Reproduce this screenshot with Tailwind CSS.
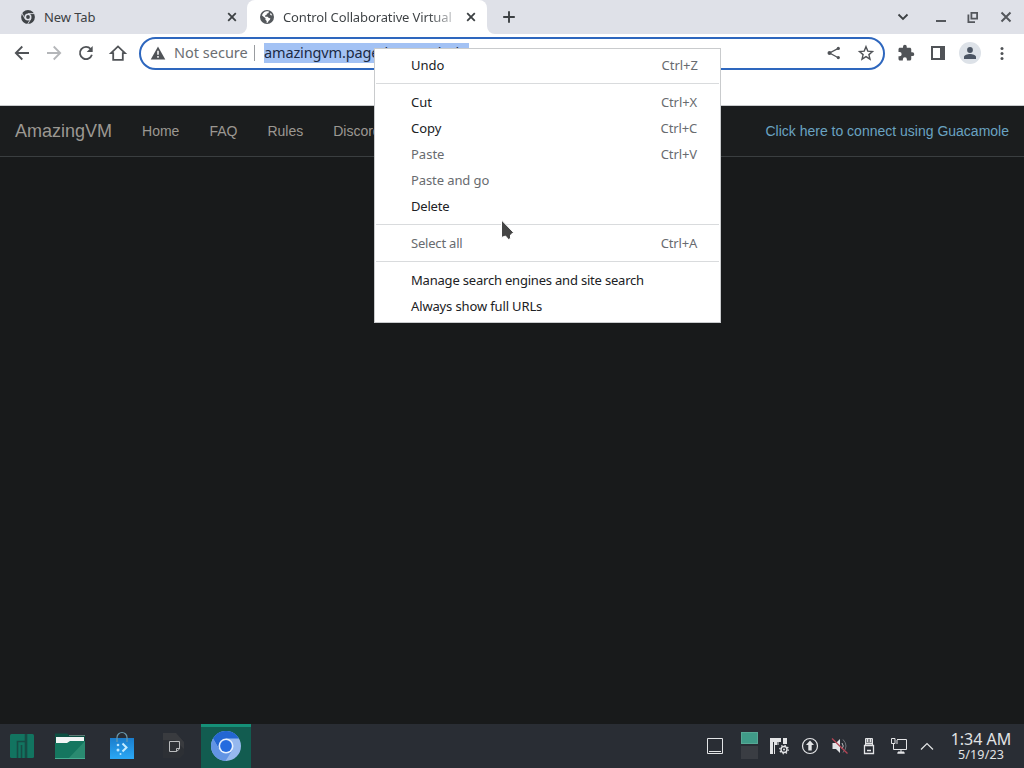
<!DOCTYPE html>
<html lang="en">
<head>
  <meta charset="UTF-8" />
  <meta name="viewport" content="width=device-width, initial-scale=1.0" />
  <title>Control Collaborative Virtual Machines</title>
  <script src="https://cdn.jsdelivr.net/npm/@tailwindcss/browser@4"></script>
</head>
<body class="relative w-[1024px] h-[768px] overflow-hidden flex flex-col bg-[#181a1b] font-['Noto_Sans',sans-serif] text-[13px] text-[#3c4043]">
  <!-- Tab strip -->
  <header class="h-[34px] shrink-0 bg-[#dfe1e8] flex">
    <div class="w-[247px] flex items-center pl-[21px] pr-[7px]">
      <svg class="w-[14px] h-[14px]" viewBox="0 0 14 14" fill="none" stroke="#3f4347">
        <circle cx="7" cy="7" r="5.2" stroke-width="3.4" />
        <circle cx="7" cy="7" r="1.9" fill="#3f4347" stroke="none" />
        <path d="M7 3.6h6.6M4.1 8.8L.8 3M9.9 8.7L6.7 14" stroke="#dfe1e8" stroke-width=".9" />
      </svg>
      <span class="ml-[9px] pt-[2px] tracking-[-0.1px]">New Tab</span>
      <svg class="ml-auto w-4 h-4" viewBox="0 0 16 16" stroke="#3c4043" stroke-width="1.8"><path d="M4.2 4.2l7.6 7.6M11.8 4.2l-7.6 7.6" /></svg>
    </div>
    <div class="relative w-[240px] bg-white rounded-t-lg flex items-center pl-[13px] pr-2">
      <div class="absolute bottom-0 -left-2 w-2 h-2 bg-white"><div class="w-2 h-2 bg-[#dfe1e8] rounded-br-lg"></div></div>
      <div class="absolute bottom-0 -right-2 w-2 h-2 bg-white"><div class="w-2 h-2 bg-[#dfe1e8] rounded-bl-lg"></div></div>
      <svg class="w-[14px] h-[14px] shrink-0" viewBox="0 0 14 14">
        <circle cx="7" cy="7" r="7" fill="#54585c" />
        <path d="M5.5 1.6c1.6-.5 2.6-.3 3.4 0l-.4 1.5-1.7.6-.3 1.3-1.5.5.2 1.2h2.5l1.1 1.3 1.5.2-.3 1.5-1.500 1.200-.6 1.500-1.300.7.1-2-1.300-1.300.1-1.600L2 5.400C2.500 3.500 3.900 2.100 5.500 1.600zM10.200 3l1.200.8.8 1.800-1.900-.5z" fill="#fff" />
      </svg>
      <span class="ml-[9px] pt-[2px] w-[170px] overflow-hidden whitespace-nowrap tracking-[-0.12px] bg-linear-to-r from-[#3c4043] from-85% to-[#c8cacc] bg-clip-text text-transparent">Control Collaborative Virtual</span>
      <svg class="ml-auto w-4 h-4 shrink-0" viewBox="0 0 16 16" stroke="#3c4043" stroke-width="1.800"><path d="M4.200 4.200l7.600 7.600M11.800 4.200l-7.600 7.600" /></svg>
    </div>
    <svg class="ml-[15px] mt-[10px] w-[14px] h-[14px]" viewBox="0 0 14 14" stroke="#3c4043" stroke-width="1.900"><path d="M7 1.200v11.600M1.200 7h11.600" /></svg>
    <div class="ml-auto flex items-center gap-[18px] pr-[10px]">
      <svg class="w-4 h-4" viewBox="0 0 16 16" fill="none" stroke="#3c4043" stroke-width="1.800"><path d="M3.500 5.500L8 10l4.500-4.500" /></svg>
      <svg class="ml-1 w-4 h-4" viewBox="0 0 16 16" stroke="#54575c" stroke-width="2"><path d="M3 12h10" /></svg>
      <svg class="-ml-[2px] w-4 h-4" viewBox="0 0 16 16" fill="none" stroke="#54575c" stroke-width="1.800"><path d="M6.400 3.900h5.700v5.700H6.400zM3.400 5.500v7.600H10" /></svg>
      <svg class="-ml-px w-4 h-4" viewBox="0 0 16 16" stroke="#54575c" stroke-width="2"><path d="M3.500 3.500l9 9M12.500 3.500l-9 9" /></svg>
    </div>
  </header>

  <!-- Toolbar -->
  <div class="h-[38px] shrink-0 bg-white flex items-center pl-3">
    <div class="flex gap-3">
      <svg class="w-5 h-5" viewBox="0 0 20 20" fill="none" stroke="#505357" stroke-width="1.800"><path d="M17 10H4M10.300 3.500L3.800 10l6.500 6.500" /></svg>
      <svg class="w-5 h-5" viewBox="0 0 20 20" fill="none" stroke="#b4b6b9" stroke-width="1.800"><path d="M3 10h13M9.700 3.500l6.500 6.500-6.500 6.500" /></svg>
      <svg class="w-5 h-5" viewBox="0 0 20 20" fill="none" stroke="#505357" stroke-width="1.800"><path d="M15.900 11.800A6.100 6.100 0 1 1 14.700 6" /><path d="M16.700 3v6h-6z" fill="#505357" stroke="none" /></svg>
      <svg class="w-5 h-5" viewBox="0 0 20 20" fill="none" stroke="#505357" stroke-width="1.800"><path d="M3 10.200h2.200v6.700h9.600v-6.700H17L10 3.400z" /></svg>
    </div>
    <!-- Address bar -->
    <div class="ml-[11px] mt-px w-[746px] h-[33px] rounded-full border-2 border-[#2e67be] bg-white flex items-center pl-2 pr-2 pb-px text-[14.500px]">
      <svg class="w-[18px] h-[18px]" viewBox="0 0 18 18"><path d="M9 2.500L16.300 15.500H1.700z" fill="#505357" /><path d="M9 6.800v4M9 12v1.800" stroke="#fff" stroke-width="1.500" /></svg>
      <span class="ml-[7px] w-[74px] whitespace-nowrap text-[#6b6e72]">Not secure</span>
      <span class="ml-[6px] w-px h-4 bg-[#999ca0]"></span>
      <span class="ml-[9px] w-[205px] h-5 leading-[18px] bg-[#a3c2f4] text-[#1b2a45] whitespace-nowrap tracking-[-0.14px]">amazingvm.page/browse-hub</span>
      <svg class="ml-auto w-4 h-4" viewBox="0 0 16 16" fill="#505357" stroke="#505357"><path d="M12.300 3.400L3.600 8l8.700 4.700" fill="none" stroke-width="1.300" /><circle cx="12.300" cy="3.400" r="1.600" stroke="none" /><circle cx="3.500" cy="8" r="2" stroke="none" /><circle cx="12.300" cy="12.600" r="1.600" stroke="none" /></svg>
      <svg class="ml-[15px] w-[18px] h-[18px]" viewBox="0 0 18 18" fill="none" stroke="#505357" stroke-width="1.400"><path d="M9 2.700l1.800 4.400 4.700.4-3.600 3.100 1.100 4.600L9 12.700l-4 2.500 1.100-4.600-3.600-3.100 4.700-.4z" /></svg>
    </div>
    <svg class="ml-[12px] w-[18px] h-[18px]" viewBox="0 0 24 24" fill="#505357"><path d="M20.500 11H19V7c0-1.100-.9-2-2-2h-4V3.500a2.500 2.500 0 0 0-5 0V5H4c-1.100 0-2 .9-2 2v3.800h1.500a2.700 2.700 0 0 1 0 5.400H2V20c0 1.100.9 2 2 2h3.800v-1.500a2.700 2.700 0 0 1 5.400 0V22H17c1.100 0 2-.9 2-2v-4h1.500a2.500 2.500 0 0 0 0-5z" /></svg>
    <svg class="ml-[15px] w-4 h-4" viewBox="0 0 16 16"><path d="M1 1h14v14H1zM3 3v10h7V3z" fill="#505357" fill-rule="evenodd" /></svg>
    <div class="ml-[13px] size-[22px] rounded-full bg-[#dde2e8] flex items-center justify-center">
      <svg class="w-3 h-3" viewBox="0 0 12 12" fill="#4b5563"><circle cx="6" cy="3" r="2.900" /><path d="M0 12v-2c0-2 3.500-3 6-3s6 1 6 3v2z" /></svg>
    </div>
    <svg class="ml-[13px] w-4 h-4" viewBox="0 0 16 16" fill="#505357"><circle cx="8" cy="3.500" r="1.500" /><circle cx="8" cy="8.500" r="1.500" /><circle cx="8" cy="13.500" r="1.500" /></svg>
  </div>
  <div class="h-[34px] shrink-0 bg-white border-b border-[#c9cbcd]"></div>

  <!-- Web page -->
  <nav class="h-[51px] shrink-0 bg-[#1b1d1e] border-b border-[#3a3e40] flex items-center px-[15px] font-['Liberation_Sans',Arial,sans-serif] text-[14px] text-[#9b9892]">
    <a href="#" class="text-[18px]">AmazingVM</a>
    <div class="ml-[30px] flex gap-[30px]">
      <a href="#">Home</a>
      <a href="#">FAQ</a>
      <a href="#">Rules</a>
      <a href="#">Discord</a>
    </div>
    <a href="#" class="ml-auto text-[#6aa3c2]">Click here to connect using Guacamole</a>
  </nav>
  <main class="grow bg-[#181a1b]"></main>

  <!-- Taskbar -->
  <footer class="h-[44px] shrink-0 bg-[#292d34] flex items-center">
    <svg class="ml-[9px] w-[26px] h-[26px]" viewBox="0 0 26 26"><rect x="1" y="1" width="24" height="24" rx="1.500" fill="#127460" /><path d="M8.500 25V8.500H16M16.500 1v24M12.500 12v13M17.500 25V1" fill="none" stroke="#174c45" stroke-width="1.600" /></svg>
    <svg class="ml-[19px] w-8 h-7" viewBox="0 0 32 28">
      <path d="M1 4V1.500h12L16 4h15v8H1z" fill="#0d4f42" /><path d="M15 3.500h16" stroke="#769d94" stroke-width=".7" />
      <path d="M2 5h28v8H2z" fill="#f2f5f5" />
      <path d="M1 11h12l3-2h15v18H1z" fill="#15765f" /><path d="M31 9v18H14z" fill="#2a8a70" /><path d="M1 26.500h30" stroke="#46ad91" />
    </svg>
    <svg class="ml-[23px] w-[26px] h-[30px]" viewBox="0 0 26 30">
      <defs><linearGradient id="bag" x2="0" y2="1"><stop stop-color="#1a7dcc" /><stop offset="1" stop-color="#2ba8f5" /></linearGradient></defs>
      <path d="M1 7h24v21H1z" fill="url(#bag)" />
      <path d="M8 11V6.500a5 5 0 0 1 10 0V11" fill="none" stroke="#6898ad" stroke-width="1.200" />
      <path d="M13.500 12.500l4 4-4 4" fill="none" stroke="#c3ecff" stroke-width="2" /><circle cx="9" cy="14" r="1.300" fill="#b9e5ff" /><circle cx="9" cy="19" r="1.500" fill="#b9e5ff" /><circle cx="11.500" cy="23" r="1" fill="#b9e5ff" />
    </svg>
    <svg class="ml-[26px] w-[26px] h-[28px]" viewBox="0 0 26 28"><path d="M2 1h13l8 9v12l-4 4H2z" fill="#2d3035" /><path d="M2 1h13l8 9v7L14 8H2z" fill="#393b3f" /><path d="M8.500 9.500h10v7.500l-3 2.500h-7zM18.500 16.500h-3v3" fill="none" stroke="#b9bbbd" /></svg>
    <div class="ml-[14px] w-[50px] h-[44px] bg-[#125c50] border-t-[3px] border-[#159078] flex items-center justify-center">
      <svg class="-mt-[4px] w-[30px] h-[30px]" viewBox="0 0 30 30">
        <circle cx="15" cy="15" r="15" fill="#96b8ee" />
        <path d="M2 7.500A15 15 0 0 1 28 7.500H15L8.500 18.800z" fill="#2366d2" />
        <path d="M2 7.500A15 15 0 0 0 14.500 30L21.500 18.800 8.500 18.800z" fill="#6294e4" />
        <circle cx="15" cy="15" r="7.500" fill="#e5effc" /><circle cx="15" cy="15" r="5.900" fill="#246bdf" />
      </svg>
    </div>
    <!-- System tray -->
    <svg class="ml-auto w-[18px] h-[18px]" viewBox="0 0 18 18" fill="none" stroke="#e2e4e6"><path d="M1.500 1.500h15v15h-15zM3 14.500h12" /></svg>
    <div class="ml-[17px] -mt-[2px] w-[17px]"><div class="h-3 bg-[#409b88] border border-[#57a895]"></div><div class="mt-[2px] h-[13px] bg-[#3a3d43]"></div></div>
    <svg class="ml-[12px] w-[20px] h-[18px]" viewBox="0 0 20 18" fill="#e3e4e6">
      <path d="M0 1h11v4H9v3H5v9H0zM13 1h4v6h-4z" /><path d="M3.500 5v12M8 5v11" stroke="#292d34" />
      <circle cx="14" cy="12.500" r="5.500" fill="#292d34" /><circle cx="14" cy="12.500" r="3" fill="none" stroke="#e3e4e6" stroke-width="1.400" />
      <circle cx="14" cy="12.500" r="4.200" fill="none" stroke="#e3e4e6" stroke-width="1.400" stroke-dasharray="1.300 2" /><circle cx="14" cy="12.500" r="1" />
    </svg>
    <svg class="ml-[11px] w-[18px] h-[18px]" viewBox="0 0 18 18"><circle cx="9" cy="9" r="7.500" fill="none" stroke="#e3e4e6" stroke-width="1.200" /><path d="M9 3.500L13 8h-2.300v5.500H7.300V8H5z" fill="#e3e4e6" /></svg>
    <svg class="ml-[12px] w-[18px] h-[18px]" viewBox="0 0 18 18"><path d="M1.500 6H5l4-4v14l-4-4H1.500z" fill="#e3e4e6" /><path d="M11 6q2.500 3 0 6" fill="none" stroke="#b9bbbd" /><path d="M12 2.500q6 6.500 0 13" fill="none" stroke="#73777c" /><path d="M1 1.500l15.500 15" stroke="#b54555" stroke-width="1.300" /></svg>
    <svg class="ml-[14px] w-[12px] h-[18px]" viewBox="0 0 12 18" fill="none" stroke="#e3e4e6"><path d="M2.500 8V1.500h7V8" /><path d="M1.500 8.500h9v8h-9zM4 13.500h4" stroke-width="1.300" /><path d="M2.500 6.500h7M4.500 2v3M7.500 2v3" stroke-width="2" /></svg>
    <svg class="ml-[15px] w-[18px] h-[18px]" viewBox="0 0 18 18" fill="none" stroke="#e3e4e6"><path d="M1.500 1.500h3.500v5H1.500zM3.500 6.500v6H6M7 2.500h9.500v10h-11M7 3v4M11 13v3M7 16h8" /><path d="M8 15.500h6" stroke-width="2" /></svg>
    <svg class="ml-[12px] w-[14px] h-[14px]" viewBox="0 0 14 14" fill="none" stroke="#e3e4e6" stroke-width="1.200"><path d="M1 10.500l6-6 6 6" /></svg>
    <div class="ml-[14px] w-[66px] mr-[10px] flex flex-col items-center text-[#e1e3e5]">
      <span class="text-[16px] leading-[17px] whitespace-nowrap">1:34 AM</span>
      <span class="text-[12.500px] leading-[13px] tracking-[0.15px]">5/19/23</span>
    </div>
  </footer>

  <!-- Context menu -->
  <div class="absolute left-[374px] top-[48px] w-[347px] h-[275px] bg-white border border-[#c9cbcd] pt-[3px] text-[13px] text-[#202124] leading-[26px]">
    <div class="h-[26px] pl-9 pr-[22px] flex justify-between"><span>Undo</span><span class="text-[#686b6f]">Ctrl+Z</span></div>
    <div class="h-px bg-[#d9dbdd] mx-px mt-[5px] mb-[5px]"></div>
    <div class="h-[26px] pl-9 pr-[23px] flex justify-between"><span>Cut</span><span class="text-[#686b6f] tracking-[-0.1px]">Ctrl+X</span></div>
    <div class="h-[26px] pl-9 pr-[23px] flex justify-between"><span>Copy</span><span class="text-[#686b6f] tracking-[-0.15px]">Ctrl+C</span></div>
    <div class="h-[26px] pl-9 pr-[23px] flex justify-between text-[#686b6f]"><span>Paste</span><span class="tracking-[-0.1px]">Ctrl+V</span></div>
    <div class="h-[26px] pl-9 text-[#686b6f] tracking-[-0.1px]">Paste and go</div>
    <div class="h-[26px] pl-9 tracking-[-0.2px]">Delete</div>
    <div class="h-px bg-[#d9dbdd] mx-px mt-[5px] mb-[5px]"></div>
    <div class="h-[26px] pl-9 pr-[23px] flex justify-between text-[#686b6f]"><span class="tracking-[-0.2px]">Select all</span><span class="tracking-[-0.2px]">Ctrl+A</span></div>
    <div class="h-px bg-[#d9dbdd] mx-px mt-[5px] mb-[5px]"></div>
    <div class="h-[26px] pl-9 tracking-[-0.2px]">Manage search engines and site search</div>
    <div class="h-[26px] pl-9 tracking-[-0.14px]">Always show full URLs</div>
  </div>

  <!-- Mouse pointer -->
  <svg class="absolute left-[500px] top-[218px] w-[15px] h-[24px]" viewBox="0 0 15 24"><path d="M1.500 2v17.500l4-1.500 3 3.500 2-1V17l3-2.500z" fill="#454545" stroke="#fff" stroke-width="1" /></svg>
</body>
</html>
